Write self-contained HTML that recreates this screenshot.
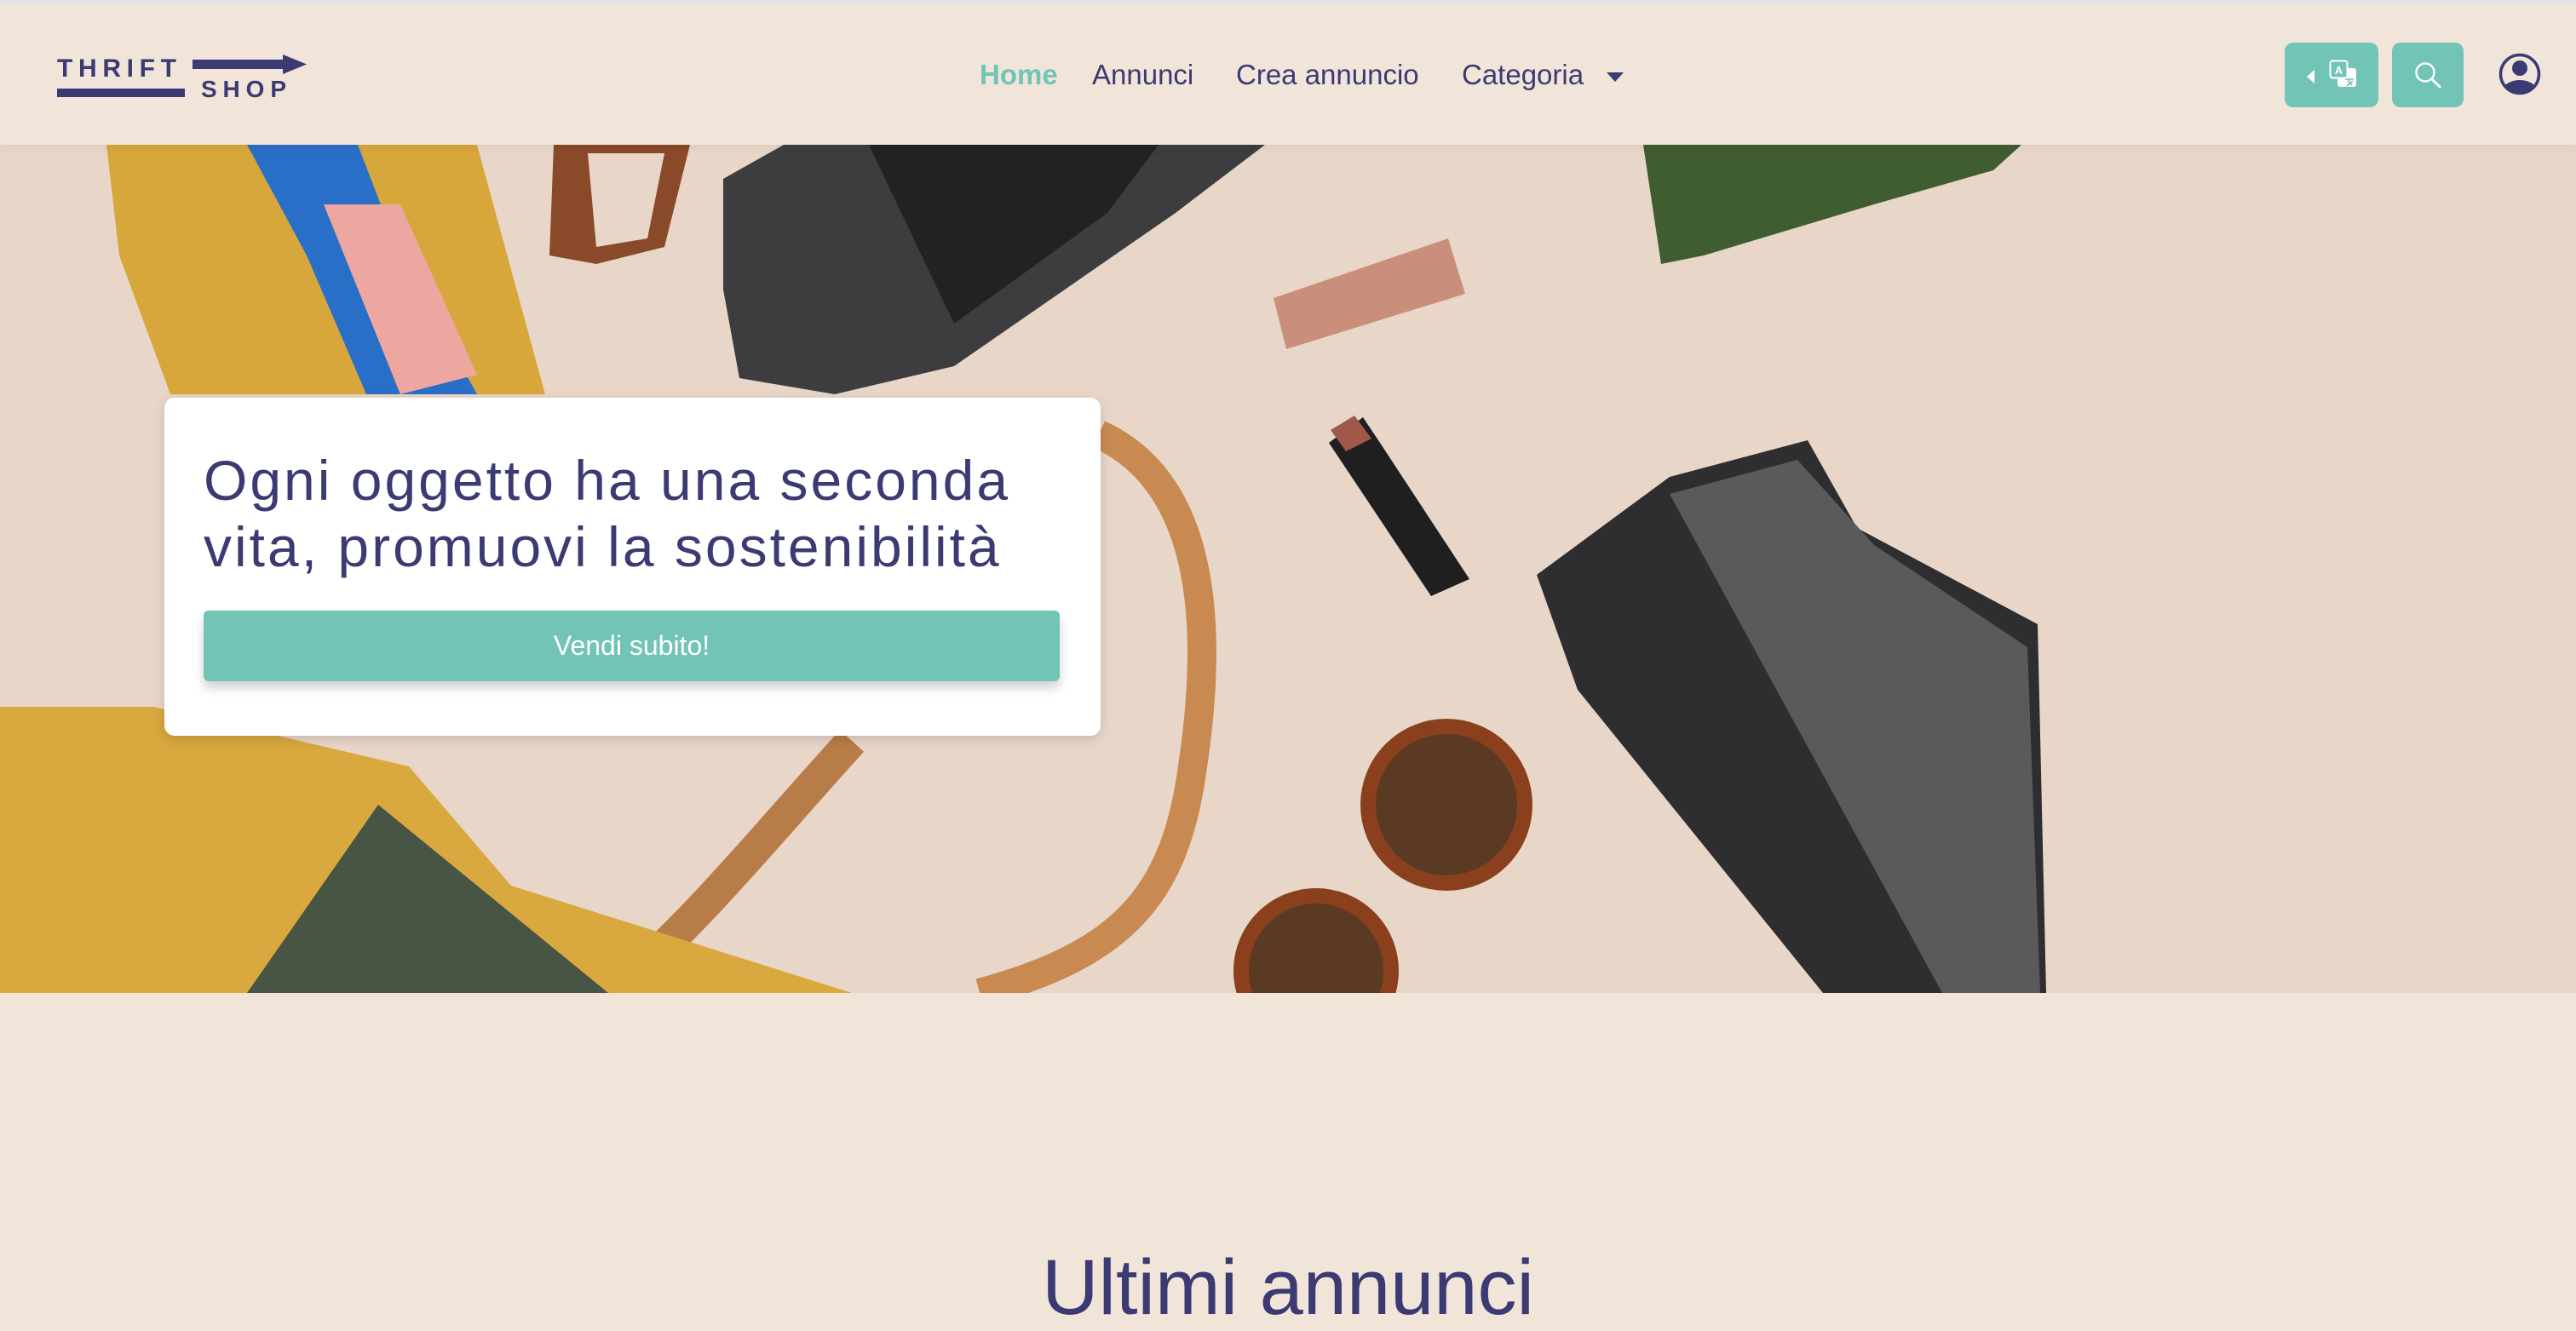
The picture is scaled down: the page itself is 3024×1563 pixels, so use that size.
<!DOCTYPE html>
<html><head><meta charset="utf-8"><style>
*{margin:0;padding:0;box-sizing:border-box}
body{width:3024px;height:1556px;overflow:hidden;background:#f1e5da;font-family:"Liberation Sans",sans-serif;position:relative}
.top{position:absolute;left:0;top:0;width:3024px;height:5px;background:#e4e4e4}
nav{position:absolute;left:0;top:5px;width:3024px;height:165px;background:#f1e5da;z-index:2;box-shadow:0 4px 10px rgba(0,0,0,.05)}
.n{position:absolute;top:63px;font-size:33px;color:#3b3a72;line-height:40px}
.btn{position:absolute;top:50px;height:76px;background:#72c4b7;border-radius:10px}
.hero{position:absolute;left:0;top:170px;width:3024px;height:996px;overflow:hidden;background:#e9d8ca}
.card{position:absolute;left:193px;top:467px;width:1099px;height:397px;background:#fff;border-radius:12px;box-shadow:0 4px 14px rgba(0,0,0,.15);z-index:3}
.card h1{position:absolute;left:46px;top:58px;font-weight:normal;font-size:66px;line-height:78px;color:#3b3a72;width:1040px;white-space:nowrap;letter-spacing:3px}
.card .b{position:absolute;left:46px;top:250px;width:1005px;height:83px;background:#72c4b7;border-radius:6px;color:#fff;font-size:32px;text-align:center;line-height:83px;box-shadow:0 8px 12px rgba(0,0,0,.18)}
h2{position:absolute;left:0;width:3024px;top:1462px;text-align:center;font-weight:normal;font-size:92px;color:#3b3a72;line-height:100px}
</style></head><body>
<div class="top"></div>
<nav>
<svg style="position:absolute;left:60px;top:55px" width="310" height="65" viewBox="60 60 310 65">
<text x="67" y="90" font-family="Liberation Sans" font-weight="bold" font-size="30" letter-spacing="7" fill="#3b3a72" textLength="147">THRIFT</text>
<rect x="226" y="70" width="108" height="11" fill="#3b3a72"/>
<polygon points="332,64 360,75.5 332,87" fill="#3b3a72"/>
<rect x="67" y="104" width="150" height="10" fill="#3b3a72"/>
<text x="236" y="114" font-family="Liberation Sans" font-weight="bold" font-size="28" letter-spacing="8" fill="#3b3a72" textLength="108">SHOP</text>
</svg>
<div class="n" style="left:1150px;color:#72c4b7;font-weight:bold">Home</div>
<div class="n" style="left:1282px">Annunci</div>
<div class="n" style="left:1451px">Crea annuncio</div>
<div class="n" style="left:1716px">Categoria</div>
<div style="position:absolute;left:1886px;top:80px;border-left:10px solid transparent;border-right:10px solid transparent;border-top:11px solid #3b3a72"></div>
</nav>
<div class="btn" style="left:2682px;width:110px;z-index:3">
<div style="position:absolute;left:26px;top:32px;border-top:8px solid transparent;border-bottom:8px solid transparent;border-right:9px solid #fff"></div>
<svg style="position:absolute;left:52px;top:20px" width="34" height="34" viewBox="0 0 34 34">
<rect x="10" y="10" width="22" height="22" rx="3" fill="#fff"/>
<rect x="1.5" y="1.5" width="20" height="20" rx="3" fill="#72c4b7" stroke="#fff" stroke-width="2"/>
<text x="11.5" y="17" font-family="Liberation Sans" font-weight="bold" font-size="13" fill="#fff" text-anchor="middle">A</text>
<path d="M19 23h10M24 22v3M21 31l7-6M22 25l5 5" stroke="#72c4b7" stroke-width="1.6" fill="none"/>
</svg>
</div>
<div class="btn" style="left:2808px;width:84px;z-index:3">
<svg style="position:absolute;left:26px;top:22px" width="34" height="34" viewBox="0 0 34 34"><circle cx="13" cy="13" r="10.5" fill="none" stroke="#fff" stroke-width="2.4"/><path d="M21 21l9 9" stroke="#fff" stroke-width="3" stroke-linecap="round"/></svg>
</div>
<svg style="position:absolute;left:2932px;top:61px;z-index:3" width="52" height="52" viewBox="0 0 52 52">
<defs><clipPath id="c"><circle cx="26" cy="26" r="21.5"/></clipPath></defs>
<circle cx="26" cy="26" r="22.5" fill="none" stroke="#3b3a72" stroke-width="3.5"/>
<circle cx="26" cy="19" r="9" fill="#3b3a72"/>
<ellipse cx="26" cy="46" rx="20" ry="13" fill="#3b3a72" clip-path="url(#c)"/>
</svg>
<div class="hero">
<svg width="3024" height="996" viewBox="0 170 3024 996">
<rect x="0" y="170" width="3024" height="996" fill="#e8d7c9"/>
<polygon points="125,170 560,170 640,463 200,463 140,300" fill="#d8a73c"/>
<polygon points="290,170 420,170 470,300 560,463 430,463 360,300" fill="#2a6fc7"/>
<polygon points="380,240 470,240 560,440 470,463" fill="#eda7a0"/>
<polygon points="650,170 810,170 780,290 700,310 645,300" fill="#8a4a2a"/>
<polygon points="690,180 780,180 760,280 700,290" fill="#e8d7c9"/>
<polygon points="849,210 920,170 1485,170 1380,250 1120,430 980,463 868,444 849,340" fill="#3d3d3f"/>
<polygon points="1020,170 1360,170 1300,250 1120,380" fill="#222"/>
<polygon points="1929,170 2373,170 2340,200 2200,240 2000,300 1950,310" fill="#3f5d31"/>
<polygon points="1495,350 1700,280 1720,345 1510,410" fill="#c98f7a"/>
<polygon points="1560,520 1600,490 1620,520 1725,680 1680,700" fill="#1f1f20"/>
<polygon points="1562,505 1590,488 1610,515 1580,530" fill="#a0584a"/>
<polygon points="1804,675 1960,560 2122,517 2180,620 2392,733 2402,1166 2140,1166 1852,810" fill="#2e2e30"/>
<polygon points="1960,580 2110,540 2200,640 2380,760 2395,1166 2280,1166 2080,800" fill="#5a5a5c"/>
<path d="M1290,510 C1400,560 1430,700 1400,900 C1380,1050 1320,1120 1150,1166" stroke="#c98a52" stroke-width="34" fill="none"/>
<path d="M1000,870 C900,980 820,1080 720,1166" stroke="#b87c48" stroke-width="38" fill="none"/>
<polygon points="0,830 180,830 480,900 600,1040 1000,1166 0,1166" fill="#d9a83e"/>
<polygon points="290,1166 444,945 714,1166" fill="#485444"/>
<circle cx="1698" cy="945" r="92" fill="#5a3a22" stroke="#8a401c" stroke-width="18"/>
<circle cx="1545" cy="1140" r="88" fill="#5a3a22" stroke="#8a401c" stroke-width="18"/>
</svg>
</div>
<div class="card"><h1>Ogni oggetto ha una seconda<br>vita, promuovi la sostenibilità</h1><div class="b">Vendi subito!</div></div>
<h2>Ultimi annunci</h2>
</body></html>
